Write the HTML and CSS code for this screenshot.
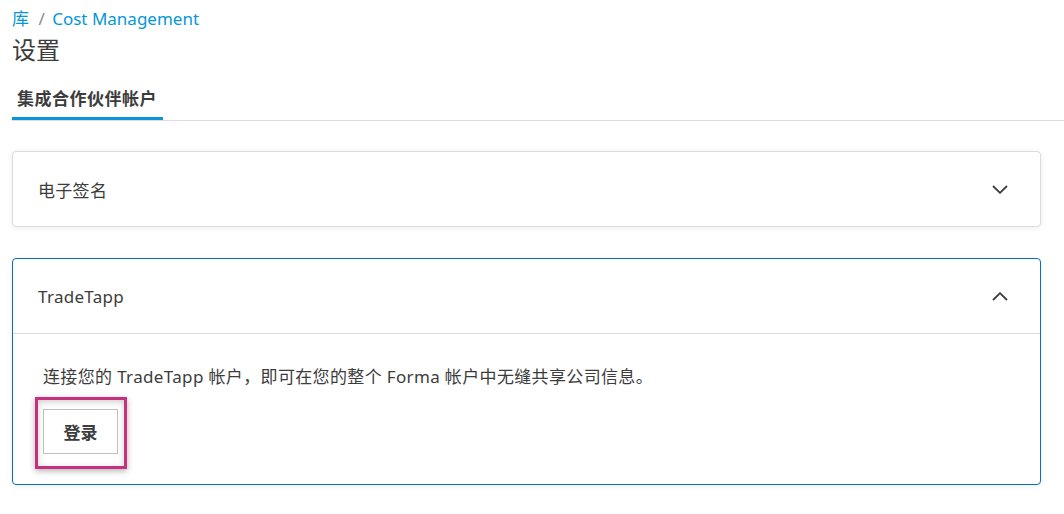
FILE: index.html
```html
<!DOCTYPE html>
<html lang="zh-CN">
<head>
    <meta charset="UTF-8">
    <meta name="viewport" content="width=device-width, initial-scale=1.0">
    <title>设置</title>
    <link rel="stylesheet" href="styles.css">
</head>
<body>
    <nav class="breadcrumb">
        <a href="#">库</a>
        <span class="sep">/</span>
        <a href="#">Cost Management</a>
    </nav>
    <h1 class="page-title">设置</h1>

    <div class="tabs">
        <div class="tab active">集成合作伙伴帐户</div>
    </div>

    <div class="panel">
        <div class="panel-header">
            <span>电子签名</span>
            <svg class="chevron" width="16" height="9" viewBox="0 0 16 9">
                <path d="M1 1 L8 7.8 L15 1" fill="none" stroke="#3c3c3c" stroke-width="1.8"/>
            </svg>
        </div>
    </div>

    <div class="panel open">
        <div class="panel-header">
            <span>TradeTapp</span>
            <svg class="chevron" width="16" height="9" viewBox="0 0 16 9">
                <path d="M1 8 L8 1.2 L15 8" fill="none" stroke="#3c3c3c" stroke-width="1.8"/>
            </svg>
        </div>
        <div class="panel-body">
            <p>连接您的 TradeTapp 帐户，即可在您的整个 Forma 帐户中无缝共享公司信息。</p>
            <div class="btn-wrap">
                <button type="button">登录</button>
                <span class="highlight"></span>
            </div>
        </div>
    </div>
</body>
</html>
```

FILE: styles.css
```css
body {
    font-family: 'Noto Sans', 'Noto Sans CJK SC', sans-serif;
    color: #3c3c3c;
    background-color: #fff;
    margin: 0;
    padding: 8px 0 20px 12px;
}

.breadcrumb {
    font-size: 17px;
    line-height: 22px;
    color: #0696d7;
}

.breadcrumb a {
    color: #0696d7;
    text-decoration: none;
}

.breadcrumb .sep {
    color: #8c8c8c;
    margin: 0 3px 0 5px;
}

.page-title {
    font-size: 24px;
    font-weight: normal;
    line-height: 32px;
    margin: 4px 0 0;
}

.tabs {
    margin-top: 21px;
    border-bottom: 1px solid #dcdcdc;
    display: flex;
}

.tab {
    font-size: 17px;
    font-weight: bold;
    letter-spacing: 0.5px;
    line-height: 24px;
    padding: 0 6px 6px 5px;
}

.tab.active {
    border-bottom: 3px solid #0696d7;
}

.panel {
    margin: 30px 23px 0 0;
    border: 1px solid #dcdcdc;
    border-radius: 4px;
    background-color: #fff;
    box-shadow: 0 1px 6px rgba(0, 0, 0, 0.08);
}

.panel.open {
    margin-top: 31px;
    border-color: #0a6fb8;
}

.panel-header {
    height: 74px;
    padding: 0 32px 0 25px;
    display: flex;
    align-items: center;
    justify-content: space-between;
    font-size: 17px;
    letter-spacing: 0.3px;
}

.panel.open .panel-header {
    border-bottom: 1px solid #dcdcdc;
}

.panel-body {
    padding: 31px 30px 30px;
}

.panel-body p {
    margin: 0;
    font-size: 17px;
    letter-spacing: 0.35px;
    line-height: 24px;
}

.btn-wrap {
    position: relative;
    display: inline-block;
    margin-top: 20px;
}

.btn-wrap button {
    display: block;
    width: 75px;
    height: 45px;
    background-color: #fff;
    border: 1px solid #bfbfbf;
    font-family: inherit;
    font-size: 17px;
    font-weight: bold;
    color: #3c3c3c;
    cursor: pointer;
}

.highlight {
    position: absolute;
    left: -8px;
    top: -12px;
    right: -9px;
    bottom: -15px;
    border: 3px solid #c6307e;
    box-shadow: 0 2px 6px rgba(0, 0, 0, 0.3), inset 0 2px 6px rgba(0, 0, 0, 0.2);
    pointer-events: none;
}
```
